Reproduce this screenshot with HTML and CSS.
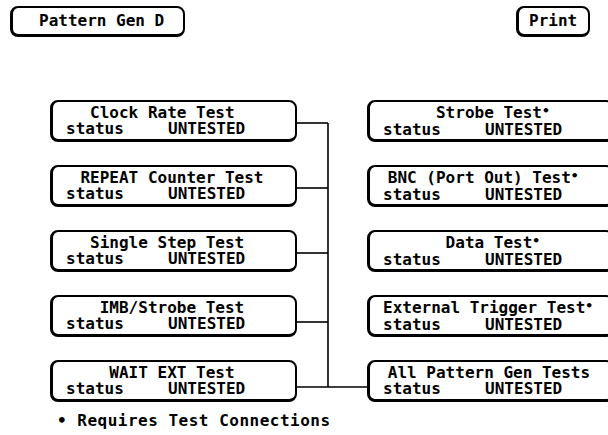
FILE: index.html
```html
<!DOCTYPE html>
<html lang="en">
<head>
    <meta charset="UTF-8">
    <title>Pattern Gen D</title>
    <link rel="stylesheet" href="styles.css">
</head>
<body>

    <div class="top-bar">
        <div class="key key-menu">Pattern Gen D</div>
        <div class="key key-print">Print</div>
    </div>

    <div class="tests">
        <div class="test left r1"><div class="title">  Clock Rate Test</div><div class="status"><span>status</span><span class="state">UNTESTED</span></div></div>
        <div class="test left r2"><div class="title"> REPEAT Counter Test</div><div class="status"><span>status</span><span class="state">UNTESTED</span></div></div>
        <div class="test left r3"><div class="title">  Single Step Test</div><div class="status"><span>status</span><span class="state">UNTESTED</span></div></div>
        <div class="test left r4"><div class="title">   IMB/Strobe Test</div><div class="status"><span>status</span><span class="state">UNTESTED</span></div></div>
        <div class="test left r5"><div class="title">    WAIT EXT Test</div><div class="status"><span>status</span><span class="state">UNTESTED</span></div></div>

        <svg class="wires" width="70" height="302" viewBox="0 0 70 302">
            <g stroke="#000" stroke-width="1.6" fill="none">
                <line x1="31" y1="23" x2="31" y2="287"/>
                <line x1="0" y1="23" x2="31" y2="23"/>
                <line x1="0" y1="88" x2="31" y2="88"/>
                <line x1="0" y1="153" x2="31" y2="153"/>
                <line x1="0" y1="222" x2="31" y2="222"/>
                <line x1="0" y1="287" x2="70" y2="287"/>
            </g>
        </svg>

        <div class="test right r1"><div class="title">     Strobe Test<span class="mark">•</span></div><div class="status"><span>status</span><span class="state">UNTESTED</span></div></div>
        <div class="test right r2"><div class="title">BNC (Port Out) Test<span class="mark">•</span></div><div class="status"><span>status</span><span class="state">UNTESTED</span></div></div>
        <div class="test right r3"><div class="title">      Data Test<span class="mark">•</span></div><div class="status"><span>status</span><span class="state">UNTESTED</span></div></div>
        <div class="test right r4"><div class="title ext">External Trigger Test<span class="mark">•</span></div><div class="status"><span>status</span><span class="state">UNTESTED</span></div></div>
        <div class="test right r5"><div class="title">All Pattern Gen Tests</div><div class="status"><span>status</span><span class="state">UNTESTED</span></div></div>
    </div>

    <p class="note">• Requires Test Connections</p>

</body>
</html>
```

FILE: styles.css
```css
body {
    margin: 0;
    width: 608px;
    height: 435px;
    overflow: hidden;
    background-color: #fff;
    color: #000;
    font-family: "DejaVu Sans Mono", "Liberation Mono", monospace;
    font-size: 16px;
    font-weight: bold;
    line-height: 16px;
}

/* softkey style: thick left and bottom edge */
.key,
.test {
    border: 2px solid #000;
    border-left-width: 3px;
    border-bottom-width: 3px;
    border-radius: 8px;
    white-space: pre;
}

.top-bar {
    display: flex;
    justify-content: space-between;
    padding: 6px 18px 0 10px;
}

.key {
    padding: 5px 0;
}

.key-menu {
    width: 144px;
    padding-left: 26px;
}

.key-print {
    width: 59px;
    padding-left: 10px;
}

.tests {
    display: grid;
    grid-template-columns: 247px 70px 247px;
    grid-template-rows: repeat(5, 42px);
    row-gap: 23px;
    margin-top: 63px;
    padding-left: 50px;
}

.test {
    box-sizing: border-box;
    height: 42px;
    padding: 3px 0 2px 13px;
    overflow: hidden;
}

.left { grid-column: 1; }
.right { grid-column: 3; }
.r1 { grid-row: 1; }
.r2 { grid-row: 2; }
.r3 { grid-row: 3; }
.r4 { grid-row: 4; }
.r5 { grid-row: 5; }

.title {
    padding-left: 0.5ch;
}

.title.ext {
    padding-left: 0;
}

.mark {
    position: relative;
    top: -3px;
    font-size: 13px;
}

.status {
    display: flex;
}

.state {
    margin-left: 4.6ch;
}

.wires {
    grid-column: 2;
    grid-row: 1 / 6;
    display: block;
}

.note {
    margin: 11px 0 0 57px;
    letter-spacing: 0.5px;
    white-space: pre;
}
```
